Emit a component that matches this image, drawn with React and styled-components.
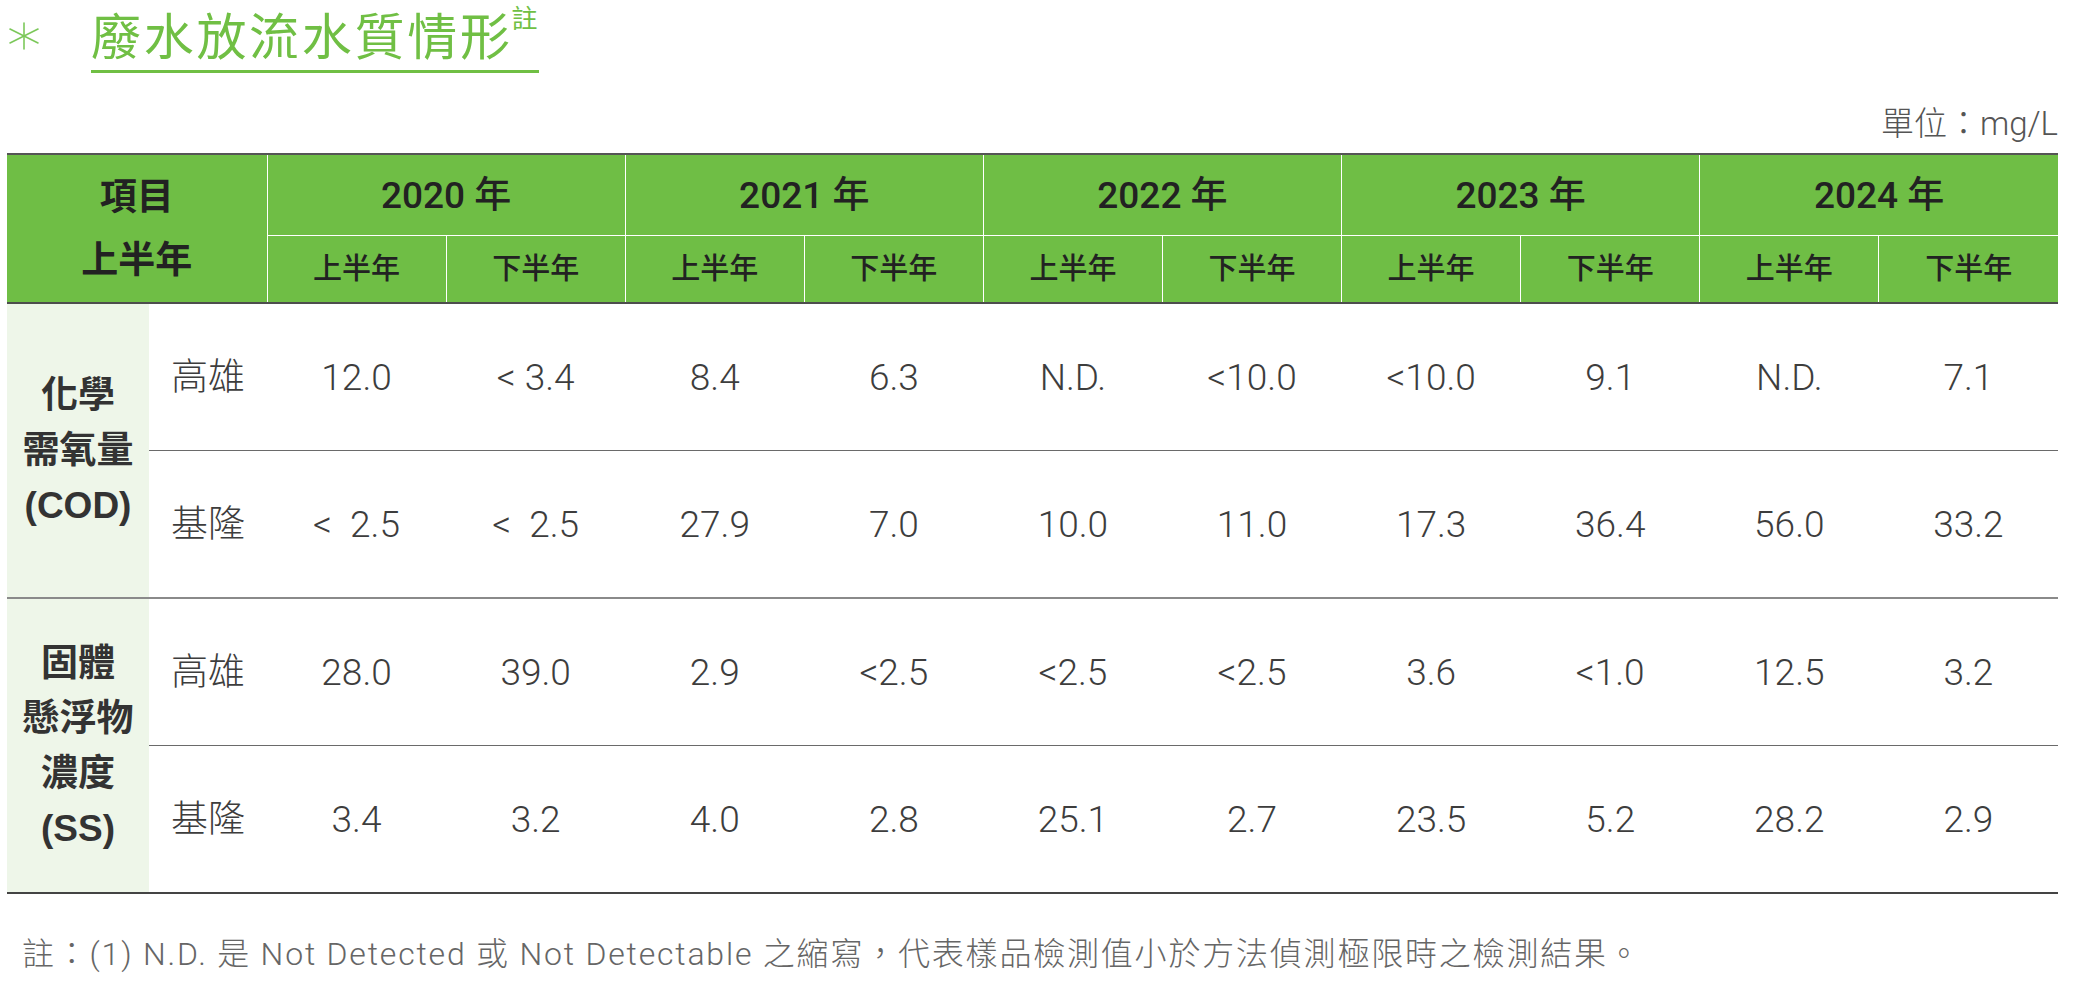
import React from "react";
import styled, { createGlobalStyle } from "styled-components";

const GREEN = "#70bf44";
const HEAD_BG = "#6fbe45";

const GlobalStyle = createGlobalStyle`
  html, body { margin: 0; padding: 0; background: #ffffff; }
  body {
    width: 2073px;
    height: 985px;
    overflow: hidden;
    font-family: Roboto, "Noto Sans CJK TC", sans-serif;
  }
`;

const Page = styled.div`
  width: 2073px;
  display: flex;
  flex-direction: column;
`;

const TitleRow = styled.div`
  display: flex;
  align-items: flex-start;
`;

const Star = styled.svg`
  flex: none;
  width: 32px;
  height: 32px;
  margin: 20px 0 0 8px;
`;

const TitleBlock = styled.div`
  display: flex;
  align-items: flex-start;
  margin-left: 51px;
  padding: 8px 1px 12px 0;
  border-bottom: 3px solid ${GREEN};
`;

const Title = styled.h1`
  margin: 0;
  font: 400 50px/1 "Noto Sans CJK TC", sans-serif;
  letter-spacing: 2.7px;
  color: ${GREEN};
`;

const Sup = styled.span`
  margin: -4px 0 0 -1px;
  font: 400 26px/1 "Noto Sans CJK TC", sans-serif;
  color: ${GREEN};
`;

const UnitRow = styled.div`
  display: flex;
  justify-content: flex-end;
  margin-top: 34px;
  padding-right: 15px;
  font: 300 33px/1 Roboto, "Noto Sans CJK TC", sans-serif;
  color: #555555;
`;

const Table = styled.table`
  margin: 13px 0 0 7px;
  width: 2051px;
  border-collapse: collapse;
  table-layout: fixed;
  border-top: 2px solid #555555;
`;

const HeadCell = styled.th`
  padding: 0;
  background: ${HEAD_BG};
  color: #222222;
  text-align: center;
  vertical-align: middle;
  border-left: 1px solid #ffffff;
  border-bottom: ${(p) => (p.$bottom ? "2px solid #4d4d4d" : "1px solid #ffffff")};
  font-family: Roboto, "Noto Sans CJK TC", sans-serif;
  font-weight: 500;
  font-size: ${(p) => p.$size}px;
  line-height: 1;
  height: ${(p) => p.$h}px;
`;

const ItemHead = styled.th`
  padding: 0;
  background: ${HEAD_BG};
  color: #222222;
  text-align: center;
  vertical-align: middle;
  border-bottom: 2px solid #4d4d4d;
  font: 700 37px/63px "Liberation Sans", "Noto Sans CJK TC", sans-serif;
`;

const Line = styled.div`
  display: block;
`;

const CatCell = styled.td`
  padding: 0;
  background: #eef6e9;
  color: #333333;
  text-align: center;
  vertical-align: middle;
  border-bottom: ${(p) => (p.$last ? "2px solid #444444" : "2px solid #8a8a8a")};
  font: 700 37px/55px "Liberation Sans", "Noto Sans CJK TC", sans-serif;
`;

const DataCell = styled.td`
  padding: 0;
  height: ${(p) => p.$h}px;
  color: #3d3d3d;
  text-align: center;
  vertical-align: middle;
  white-space: pre;
  font: 300 37px/1 Roboto, "Noto Sans CJK TC", sans-serif;
  border-bottom: ${(p) =>
    p.$groupEnd
      ? p.$last
        ? "2px solid #444444"
        : "2px solid #8a8a8a"
      : "1px solid #6a6a6a"};
`;

const Note = styled.p`
  margin: 44px 0 0 22px;
  font: 300 32px/1 Roboto, "Noto Sans CJK TC", sans-serif;
  color: #666666;
  letter-spacing: 1.8px;
  white-space: nowrap;
`;

const years = ["2020", "2021", "2022", "2023", "2024"];

const groups = [
  {
    label: ["化學", "需氧量", "(COD)"],
    rows: [
      ["高雄", ["12.0", "< 3.4", "8.4", "6.3", "N.D.", "<10.0", "<10.0", "9.1", "N.D.", "7.1"]],
      ["基隆", ["<  2.5", "<  2.5", "27.9", "7.0", "10.0", "11.0", "17.3", "36.4", "56.0", "33.2"]],
    ],
  },
  {
    label: ["固體", "懸浮物", "濃度", "(SS)"],
    rows: [
      ["高雄", ["28.0", "39.0", "2.9", "<2.5", "<2.5", "<2.5", "3.6", "<1.0", "12.5", "3.2"]],
      ["基隆", ["3.4", "3.2", "4.0", "2.8", "25.1", "2.7", "23.5", "5.2", "28.2", "2.9"]],
    ],
  },
];

function StarIcon() {
  return (
    <Star viewBox="0 0 32 32" aria-hidden="true">
      <g stroke="#7cc85a" strokeWidth="1.6" strokeLinecap="round">
        <line x1="16" y1="3" x2="16" y2="29" />
        <line x1="2" y1="9" x2="30" y2="23" />
        <line x1="2" y1="23" x2="30" y2="9" />
      </g>
    </Star>
  );
}

export default function App() {
  return (
    <Page>
      <GlobalStyle />
      <TitleRow>
        <StarIcon />
        <TitleBlock>
          <Title>廢水放流水質情形</Title>
          <Sup>註</Sup>
        </TitleBlock>
      </TitleRow>
      <UnitRow>單位：mg/L</UnitRow>
      <Table>
        <colgroup>
          <col style={{ width: 142 }} />
          <col style={{ width: 118 }} />
          {Array.from({ length: 10 }).map((_, i) => (
            <col key={i} />
          ))}
        </colgroup>
        <thead>
          <tr>
            <ItemHead colSpan={2} rowSpan={2}>
              <Line>項目</Line>
              <Line>上半年</Line>
            </ItemHead>
            {years.map((y) => (
              <HeadCell key={y} colSpan={2} $size={37} $h={80}>
                {y} 年
              </HeadCell>
            ))}
          </tr>
          <tr>
            {years.map((y) => (
              <React.Fragment key={y}>
                <HeadCell $size={29} $h={66} $bottom>
                  上半年
                </HeadCell>
                <HeadCell $size={29} $h={66} $bottom>
                  下半年
                </HeadCell>
              </React.Fragment>
            ))}
          </tr>
        </thead>
        <tbody>
          {groups.map((g, gi) =>
            g.rows.map(([site, vals], ri) => {
              const groupEnd = ri === g.rows.length - 1;
              const last = gi === groups.length - 1;
              return (
                <tr key={`${gi}-${ri}`}>
                  {ri === 0 && (
                    <CatCell rowSpan={g.rows.length} $last={last}>
                      {g.label.map((l) => (
                        <Line key={l}>{l}</Line>
                      ))}
                    </CatCell>
                  )}
                  <DataCell $h={146} $groupEnd={groupEnd} $last={last}>
                    {site}
                  </DataCell>
                  {vals.map((v, vi) => (
                    <DataCell key={vi} $h={146} $groupEnd={groupEnd} $last={last}>
                      {v}
                    </DataCell>
                  ))}
                </tr>
              );
            })
          )}
        </tbody>
      </Table>
      <Note>
        註：(1) N.D. 是 Not Detected 或 Not Detectable 之縮寫，代表樣品檢測值小於方法偵測極限時之檢測結果。
      </Note>
    </Page>
  );
}
